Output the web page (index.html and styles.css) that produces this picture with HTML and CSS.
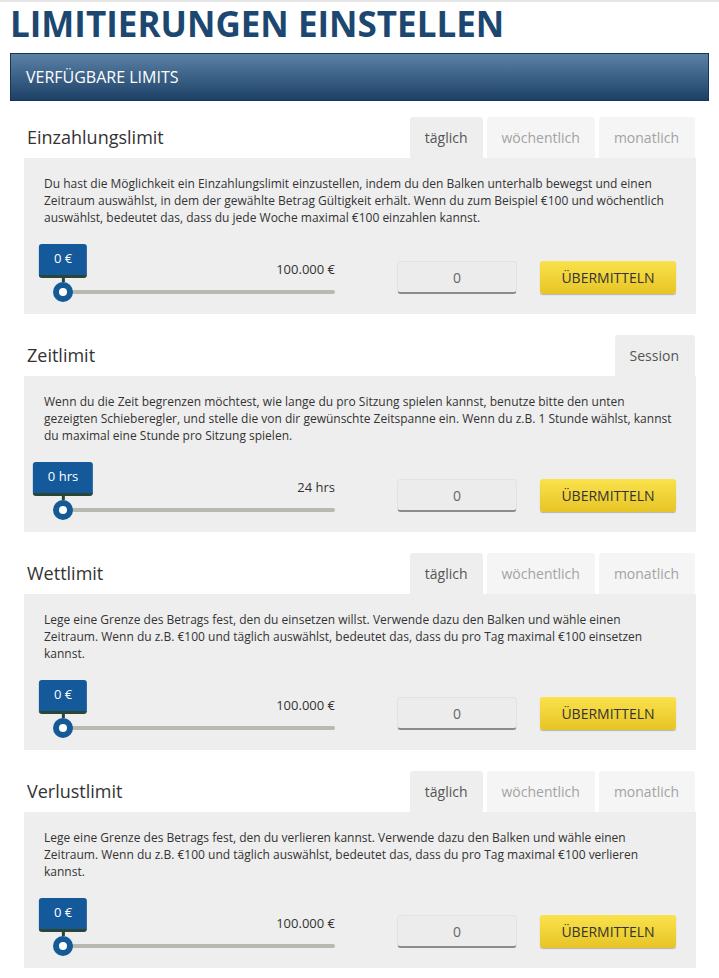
FILE: index.html
```html
<!DOCTYPE html>
<html lang="de">
<head>
  <meta charset="UTF-8" />
  <meta name="viewport" content="width=device-width, initial-scale=1.0"/>
  <title>Limitierungen einstellen</title>
  <link rel="stylesheet" href="styles.css">
</head>
<body>
  <div class="page">
    <h1>LIMITIERUNGEN EINSTELLEN</h1>
    <div class="bar">VERFÜGBARE LIMITS</div>

    <!-- Einzahlungslimit -->
    <div class="limit">
      <div class="limit-head">
        <h2>Einzahlungslimit</h2>
        <div class="tabs">
          <span class="tab active">täglich</span>
          <span class="tab">wöchentlich</span>
          <span class="tab">monatlich</span>
        </div>
      </div>
      <div class="panel">
        <p>Du hast die Möglichkeit ein Einzahlungslimit einzustellen, indem du den Balken unterhalb bewegst und einen Zeitraum auswählst, in dem der gewählte Betrag Gültigkeit erhält. Wenn du zum Beispiel €100 und wöchentlich auswählst, bedeutet das, dass du jede Woche maximal €100 einzahlen kannst.</p>
        <div class="limit-row">
          <div class="slider">
            <div class="slider-max">100.000 €</div>
            <div class="track">
              <span class="knob" style="left: 0%"><span class="bubble">0 €</span></span>
            </div>
          </div>
          <div class="limit-form">
            <input type="text" value="0">
            <button>ÜBERMITTELN</button>
          </div>
        </div>
      </div>
    </div>

    <!-- Zeitlimit -->
    <div class="limit">
      <div class="limit-head">
        <h2>Zeitlimit</h2>
        <div class="tabs">
          <span class="tab active">Session</span>
        </div>
      </div>
      <div class="panel">
        <p>Wenn du die Zeit begrenzen möchtest, wie lange du pro Sitzung spielen kannst, benutze bitte den unten gezeigten Schieberegler, und stelle die von dir gewünschte Zeitspanne ein. Wenn du z.B. 1 Stunde wählst, kannst du maximal eine Stunde pro Sitzung spielen.</p>
        <div class="limit-row">
          <div class="slider">
            <div class="slider-max">24 hrs</div>
            <div class="track">
              <span class="knob" style="left: 0%"><span class="bubble">0 hrs</span></span>
            </div>
          </div>
          <div class="limit-form">
            <input type="text" value="0">
            <button>ÜBERMITTELN</button>
          </div>
        </div>
      </div>
    </div>

    <!-- Wettlimit -->
    <div class="limit">
      <div class="limit-head">
        <h2>Wettlimit</h2>
        <div class="tabs">
          <span class="tab active">täglich</span>
          <span class="tab">wöchentlich</span>
          <span class="tab">monatlich</span>
        </div>
      </div>
      <div class="panel">
        <p>Lege eine Grenze des Betrags fest, den du einsetzen willst. Verwende dazu den Balken und wähle einen Zeitraum. Wenn du z.B. €100 und täglich auswählst, bedeutet das, dass du pro Tag maximal €100 einsetzen kannst.</p>
        <div class="limit-row">
          <div class="slider">
            <div class="slider-max">100.000 €</div>
            <div class="track">
              <span class="knob" style="left: 0%"><span class="bubble">0 €</span></span>
            </div>
          </div>
          <div class="limit-form">
            <input type="text" value="0">
            <button>ÜBERMITTELN</button>
          </div>
        </div>
      </div>
    </div>

    <!-- Verlustlimit -->
    <div class="limit">
      <div class="limit-head">
        <h2>Verlustlimit</h2>
        <div class="tabs">
          <span class="tab active">täglich</span>
          <span class="tab">wöchentlich</span>
          <span class="tab">monatlich</span>
        </div>
      </div>
      <div class="panel">
        <p>Lege eine Grenze des Betrags fest, den du verlieren kannst. Verwende dazu den Balken und wähle einen Zeitraum. Wenn du z.B. €100 und täglich auswählst, bedeutet das, dass du pro Tag maximal €100 verlieren kannst.</p>
        <div class="limit-row">
          <div class="slider">
            <div class="slider-max">100.000 €</div>
            <div class="track">
              <span class="knob" style="left: 0%"><span class="bubble">0 €</span></span>
            </div>
          </div>
          <div class="limit-form">
            <input type="text" value="0">
            <button>ÜBERMITTELN</button>
          </div>
        </div>
      </div>
    </div>
  </div>
</body>
</html>
```

FILE: styles.css
```css
body {
  margin: 0;
  font-family: "Open Sans", "Liberation Sans", sans-serif;
  color: #333;
  background-color: #fff;
  border-top: 2px solid #e6e6e6;
}

.page {
  padding: 0 10px;
}

h1 {
  margin: 4px 0 12px 0;
  font-size: 35px;
  line-height: 35px;
  font-weight: 700;
  color: #1c4770;
}

.bar {
  height: 46px;
  line-height: 46px;
  padding: 0 15px;
  border: 1px solid #183452;
  background: linear-gradient(#5b81a7, #1d4166);
  color: #fff;
  font-size: 16px;
  margin-bottom: 16px;
}

.limit {
  margin: 0 13px 21px 14px;
}

.limit-head {
  display: flex;
  justify-content: space-between;
  align-items: flex-end;
}

h2 {
  margin: 0 0 9px 3px;
  font-size: 18px;
  line-height: 24px;
  font-weight: 400;
  color: #333;
}

.tabs {
  display: flex;
  gap: 4px;
  margin-right: 1px;
}

.tab {
  height: 41px;
  line-height: 41px;
  padding: 0 15px;
  font-size: 14px;
  background-color: #f5f5f5;
  color: #a3a3a3;
  border-radius: 3px 3px 0 0;
}

.tab:last-child {
  padding-right: 16px;
}

.tab.active {
  background-color: #eee;
  color: #555;
}

.panel {
  background-color: #eee;
  padding: 17px 20px 12px 20px;
}

.panel p {
  margin: 0 3px 18px 0;
  font-size: 12px;
  line-height: 17px;
}

.limit-row {
  display: flex;
  justify-content: space-between;
  align-items: flex-start;
}

/* slider: max label on top, track with knob and value bubble */
.slider {
  width: 272px;
  padding: 16px 0 8px 19px;
}

.slider-max {
  text-align: right;
  font-size: 13px;
  line-height: 18px;
}

.track {
  position: relative;
  height: 4px;
  margin-top: 12px;
  background-color: #b9b9b0;
  border-radius: 2px;
}

.knob {
  position: absolute;
  top: 50%;
  width: 20px;
  height: 20px;
  margin: -10px 0 0 -10px;
  box-sizing: border-box;
  border: 6px solid #145a97;
  border-radius: 50%;
  background-color: #fff;
}

.bubble {
  position: absolute;
  left: 50%;
  bottom: calc(100% + 10px);
  transform: translateX(-50%);
  height: 31px;
  line-height: 29px;
  padding: 0 15px;
  background-color: #14599a;
  border-bottom: 3px solid #2a4638;
  border-radius: 3px;
  color: #fff;
  font-size: 13px;
  white-space: nowrap;
}

.bubble::after {
  content: "";
  position: absolute;
  left: 50%;
  top: calc(100% + 3px);
  width: 3px;
  height: 4px;
  margin-left: -1.5px;
  background-color: #2a4638;
}

.limit-form {
  display: flex;
  gap: 23px;
  margin-top: 17px;
}

input {
  width: 120px;
  height: 33px;
  box-sizing: border-box;
  border: 1px solid #e2e2e2;
  border-bottom: 2px solid #8b8b8b;
  border-radius: 4px;
  background-color: #ececec;
  text-align: center;
  font-family: "Open Sans", sans-serif;
  font-size: 14px;
  color: #666;
}

button {
  width: 136px;
  height: 33px;
  border: none;
  border-radius: 3px;
  background: linear-gradient(#fae24c, #e7c425);
  box-shadow: 0 1px 1px rgba(0, 0, 0, 0.25);
  font-family: "Open Sans", sans-serif;
  font-size: 14px;
  color: #333;
  cursor: pointer;
}
```
